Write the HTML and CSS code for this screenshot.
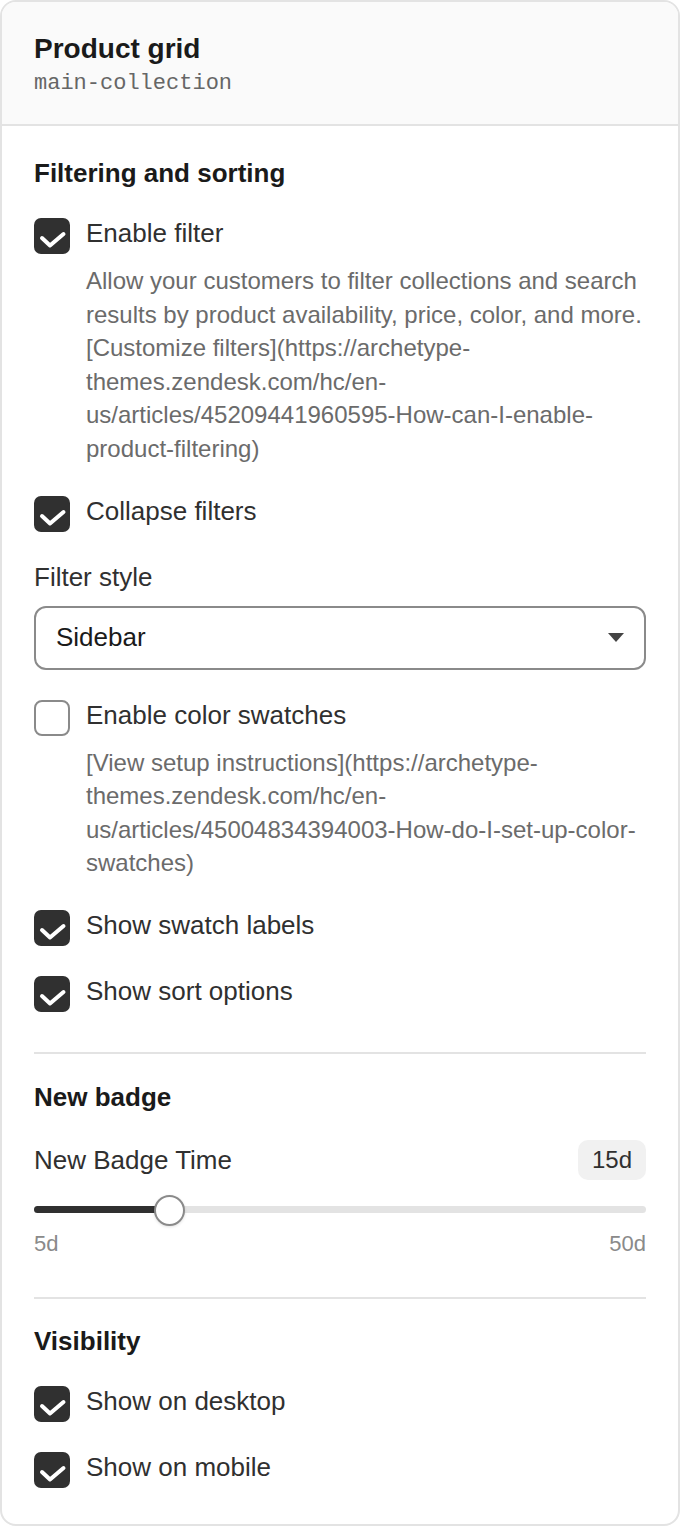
FILE: index.html
```html
<!DOCTYPE html>
<html lang="en">
<head>
<meta charset="utf-8">
<title>Product grid</title>
<link rel="stylesheet" href="styles.css">
</head>
<body>
<div class="card">
  <header class="card-header">
    <h1 class="card-title">Product grid</h1>
    <div class="card-sub">main-collection</div>
  </header>
  <div class="card-body">
    <section class="section first">
      <h2 class="section-title">Filtering and sorting</h2>
      <div class="items">
        <div class="check-row">
          <span class="box checked"><svg viewBox="0 0 36 36"><path d="M8 20 L16 27.5 L29.5 16"/></svg></span>
          <div class="check-text">
            <div class="label">Enable filter</div>
            <div class="desc">Allow your customers to filter collections and search results by product availability, price, color, and more. [Customize filters](https://archetype-themes.zendesk.com/hc/en-us/articles/45209441960595-How-can-I-enable-product-filtering)</div>
          </div>
        </div>
        <div class="check-row">
          <span class="box checked"><svg viewBox="0 0 36 36"><path d="M8 20 L16 27.5 L29.5 16"/></svg></span>
          <div class="check-text"><div class="label">Collapse filters</div></div>
        </div>
        <div class="field">
          <div class="label">Filter style</div>
          <div class="select">
            <span>Sidebar</span>
            <svg class="caret" viewBox="0 0 16 10"><path d="M0 0 H16 L8 9 Z"/></svg>
          </div>
        </div>
        <div class="check-row">
          <span class="box"></span>
          <div class="check-text">
            <div class="label">Enable color swatches</div>
            <div class="desc">[View setup instructions](https://archetype-themes.zendesk.com/hc/en-us/articles/45004834394003-How-do-I-set-up-color-swatches)</div>
          </div>
        </div>
        <div class="check-row">
          <span class="box checked"><svg viewBox="0 0 36 36"><path d="M8 20 L16 27.5 L29.5 16"/></svg></span>
          <div class="check-text"><div class="label">Show swatch labels</div></div>
        </div>
        <div class="check-row">
          <span class="box checked"><svg viewBox="0 0 36 36"><path d="M8 20 L16 27.5 L29.5 16"/></svg></span>
          <div class="check-text"><div class="label">Show sort options</div></div>
        </div>
      </div>
    </section>
    <section class="section">
      <h2 class="section-title tight">New badge</h2>
      <div class="range">
        <div class="range-head">
          <div class="label">New Badge Time</div>
          <div class="value">15d</div>
        </div>
        <div class="slider">
          <div class="track"><div class="fill" style="width:22.22%"></div></div>
          <div class="thumb" style="left:22.22%"></div>
        </div>
        <div class="range-limits"><span>5d</span><span>50d</span></div>
      </div>
    </section>
    <section class="section last">
      <h2 class="section-title">Visibility</h2>
      <div class="items">
        <div class="check-row">
          <span class="box checked"><svg viewBox="0 0 36 36"><path d="M8 20 L16 27.5 L29.5 16"/></svg></span>
          <div class="check-text"><div class="label">Show on desktop</div></div>
        </div>
        <div class="check-row">
          <span class="box checked"><svg viewBox="0 0 36 36"><path d="M8 20 L16 27.5 L29.5 16"/></svg></span>
          <div class="check-text"><div class="label">Show on mobile</div></div>
        </div>
      </div>
    </section>
  </div>
</div>
</body>
</html>
```
FILE: styles.css
```css
* { box-sizing: border-box; }
html, body {
  margin: 0;
  padding: 0;
  background: #ffffff;
}
body {
  font-family: "Liberation Sans", Arial, sans-serif;
  color: #303030;
}
.card {
  width: 680px;
  height: 1526px;
  border: 2px solid #e3e3e3;
  border-radius: 16px;
  overflow: hidden;
  background: #ffffff;
  display: flex;
  flex-direction: column;
}
.card-header {
  background: #fafafa;
  border-bottom: 2px solid #e3e3e3;
  padding: 30px 32px 27px;
  display: flex;
  flex-direction: column;
  gap: 5px;
}
.card-title {
  margin: 0;
  font-size: 28px;
  line-height: 34px;
  font-weight: 700;
  color: #1a1a1a;
}
.card-sub {
  font-family: "Liberation Mono", "Courier New", monospace;
  font-size: 22px;
  line-height: 26px;
  color: #666666;
}
.card-body {
  padding: 0 32px;
  flex: 1;
}
.section {
  padding: 27px 0 40px;
  border-top: 2px solid #e3e3e3;
}
.section.first {
  border-top: none;
  padding-top: 31px;
}
.section.last {
  padding-top: 26px;
  padding-bottom: 0;
}
.section-title {
  margin: 0 0 29px;
  font-size: 26px;
  line-height: 32px;
  font-weight: 700;
  color: #1a1a1a;
}
.section-title.tight {
  margin-bottom: 27px;
}
.items {
  display: flex;
  flex-direction: column;
  gap: 30px;
}
.check-row {
  display: flex;
  align-items: flex-start;
  gap: 16px;
}
.box {
  flex: 0 0 36px;
  width: 36px;
  height: 36px;
  border-radius: 8px;
  border: 2px solid #8a8a8a;
  background: #ffffff;
  display: flex;
}
.box.checked {
  border: none;
  background: #303030;
  border-radius: 7px;
}
.box svg {
  width: 36px;
  height: 36px;
}
.box svg path {
  fill: none;
  stroke: #ffffff;
  stroke-width: 4;
  stroke-linecap: round;
  stroke-linejoin: round;
}
.check-text {
  flex: 1;
  min-width: 0;
}
.label {
  font-size: 26px;
  line-height: 30px;
  color: #303030;
}
.desc {
  margin-top: 16px;
  font-size: 24px;
  line-height: 33.6px;
  color: #6b6b6b;
  overflow-wrap: break-word;
}
.field {
  display: flex;
  flex-direction: column;
  gap: 14px;
}
.select {
  height: 64px;
  border: 2px solid #8a8a8a;
  border-radius: 12px;
  padding: 0 20px;
  display: flex;
  align-items: center;
  justify-content: space-between;
  font-size: 26px;
  color: #1a1a1a;
}
.caret {
  width: 16px;
  height: 10px;
}
.caret path { fill: #444444; }
.range-head {
  display: flex;
  align-items: center;
  justify-content: space-between;
  height: 40px;
}
.value {
  background: #f1f1f1;
  border-radius: 10px;
  height: 40px;
  padding: 0 14px;
  display: flex;
  align-items: center;
  font-size: 24px;
  color: #303030;
}
.slider {
  position: relative;
  height: 30px;
  margin-top: 15px;
  display: flex;
  align-items: center;
}
.track {
  width: 100%;
  height: 7px;
  border-radius: 4px;
  background: #e3e3e3;
  overflow: hidden;
}
.fill {
  height: 100%;
  background: #303030;
}
.thumb {
  position: absolute;
  top: 0;
  width: 31px;
  height: 31px;
  margin-left: -15.5px;
  border-radius: 50%;
  background: #ffffff;
  border: 2px solid #8a8a8a;
  box-shadow: 0 1px 3px rgba(0,0,0,0.12);
}
.range-limits {
  margin-top: 6px;
  display: flex;
  justify-content: space-between;
  font-size: 22px;
  line-height: 26px;
  color: #8a8a8a;
}
```
